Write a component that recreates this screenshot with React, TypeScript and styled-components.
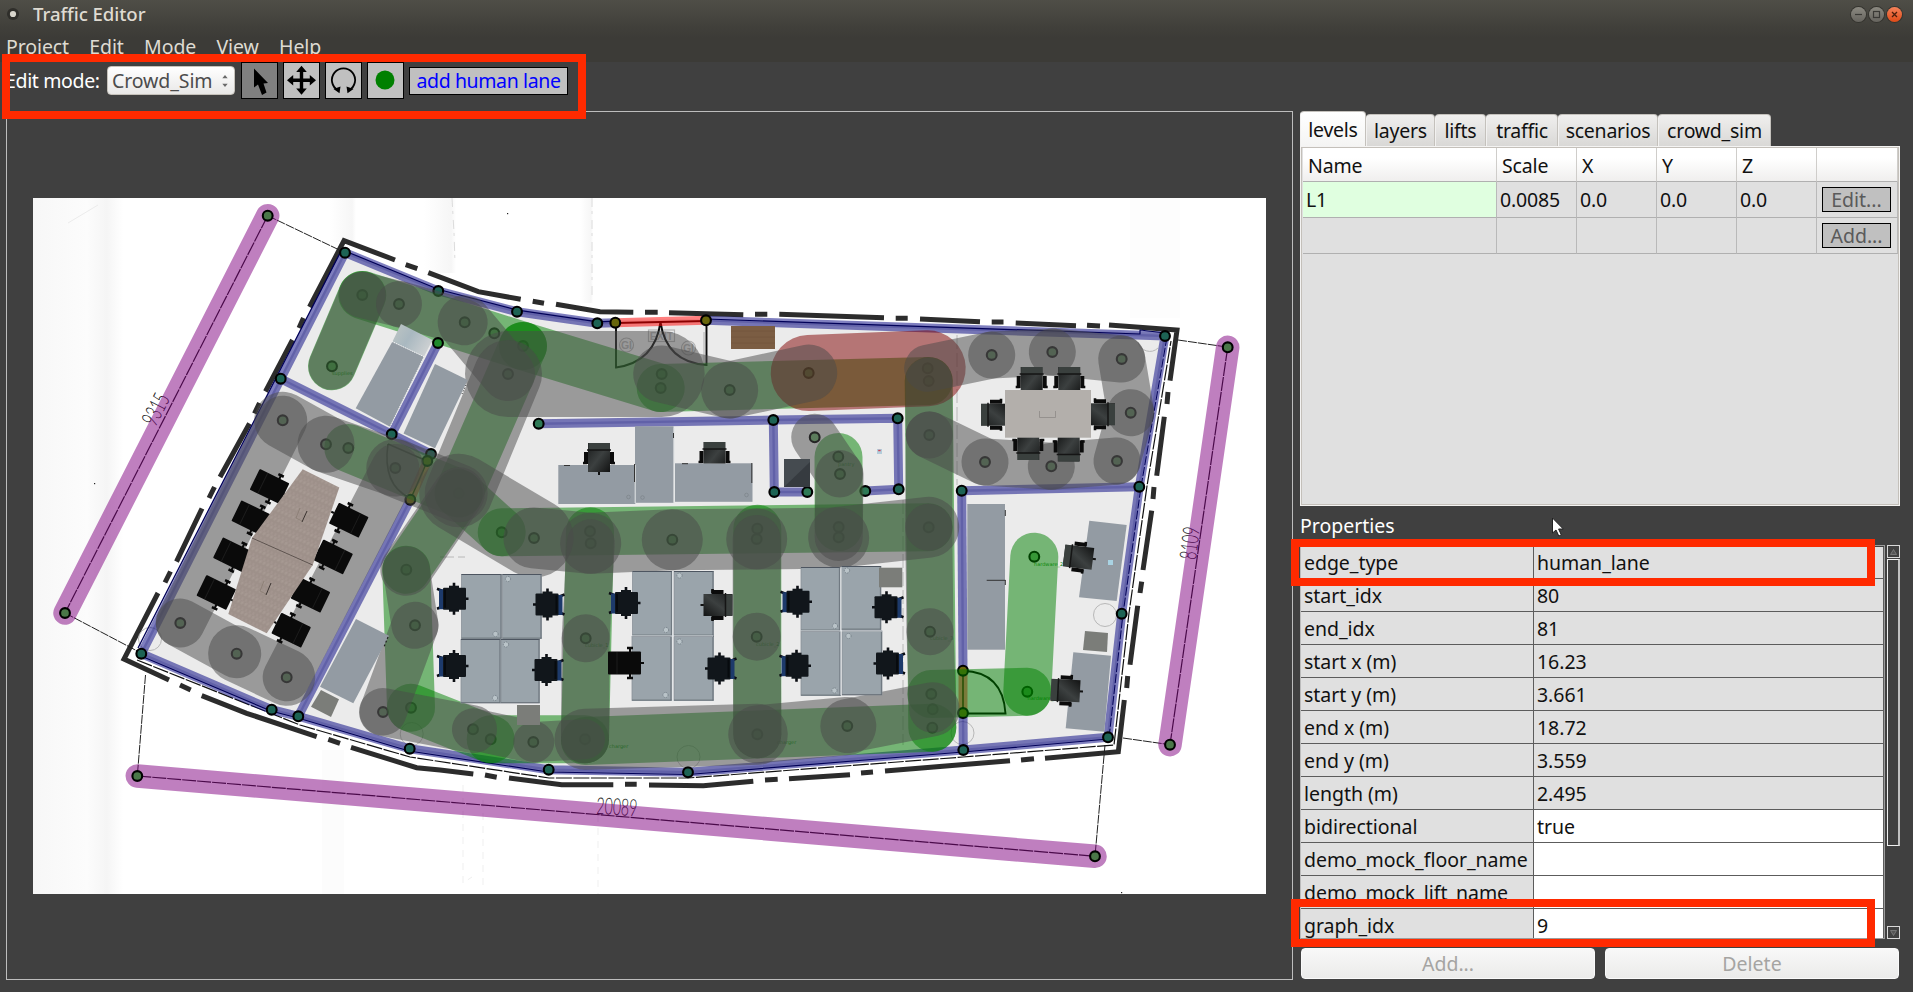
import React from 'react';
import styled, { createGlobalStyle, css } from 'styled-components';

const GlobalStyle = createGlobalStyle`
  * { box-sizing: border-box; }
  html, body { margin: 0; padding: 0; background: #404040; }
  body { font-family: "Noto Sans", "Open Sans", sans-serif; font-size: 19.5px; line-height: 24px; color: #111; overflow: hidden; }
`;

/* ---------- window chrome ---------- */

const Window = styled.div`
  position: relative;
  display: flex;
  flex-direction: column;
  width: 1913px;
  height: 992px;
  background: #404040;
  overflow: hidden;
`;

const TitleBar = styled.header`
  display: flex;
  align-items: center;
  flex: none;
  height: 28px;
  padding: 0 11px 0 6px;
  background: linear-gradient(#4f4e47, #403f3a);
  color: #dfdbd2;
`;

const Title = styled.span`
  flex: 1;
  margin-left: 13px;
  font-size: 18.6px;
  font-weight: 500;
  letter-spacing: -0.05px;
`;

const WindowButtons = styled.div`
  display: flex;
  gap: 3px;
`;

const WindowButton = styled.span<{ $close?: boolean }>`
  display: flex;
  align-items: center;
  justify-content: center;
  width: 15px;
  height: 15px;
  border-radius: 50%;
  box-shadow: 0 0 0 1px #35342f;
  background: ${p => (p.$close ? 'linear-gradient(#f4825a, #df4a16)' : 'linear-gradient(#8b8981, #66645e)')};
`;

const MenuBar = styled.nav`
  display: flex;
  align-items: center;
  flex: none;
  gap: 20.3px;
  height: 34px;
  padding: 4px 0 0 6px;
  background: linear-gradient(#403f3a, #3c3b37 30%);
  color: #dfdbd2;
  letter-spacing: -0.1px;
`;

const Toolbar = styled.div`
  display: flex;
  align-items: center;
  flex: none;
  gap: 5px;
  height: 37px;
  margin-bottom: 12px;
  padding-left: 5px;
  color: #fff;
`;

const ModeLabel = styled.span`
  width: 97px;
  letter-spacing: -0.35px;
  white-space: nowrap;
`;

const Combo = styled.div`
  display: flex;
  align-items: center;
  justify-content: space-between;
  width: 128px;
  height: 29px;
  margin-right: 1px;
  padding: 0 5px 0 4px;
  border: 1px solid #c6c2bb;
  border-radius: 4px;
  background: linear-gradient(#fff, #e9e8e7);
  color: #4c4c4c;
  letter-spacing: -0.1px;
`;

const ToolButton = styled.button<{ $active?: boolean }>`
  display: flex;
  align-items: center;
  justify-content: center;
  width: 37px;
  height: 37px;
  padding: 0;
  border: 1px solid #000;
  background: ${p => (p.$active ? '#808080' : '#c0c0c0')};
`;

const LaneButton = styled.button`
  width: 159px;
  height: 28px;
  padding: 0;
  border: 1px solid #000;
  background: #c0c0c0;
  color: #0000ff;
  font: inherit;
  line-height: 24px;
  letter-spacing: -0.38px;
`;

const Main = styled.main`
  display: flex;
  flex: none;
  height: 869px;
  padding-left: 6px;
  gap: 7px;
`;

const CanvasFrame = styled.section`
  width: 1287px;
  padding: 86px 26px;
  border: 1px solid #bdbdbd;
`;

const Plan = styled.svg`
  display: block;
  width: 1233px;
  height: 696px;
  background: #fff;
`;

const Side = styled.aside`
  display: flex;
  flex-direction: column;
  width: 600px;
`;

/* ---------- tabs and levels table ---------- */

const Tabs = styled.div`
  display: flex;
  align-items: flex-end;
  height: 35px;
`;

const Tab = styled.div<{ $w: number; $active?: boolean }>`
  width: ${p => p.$w}px;
  height: ${p => (p.$active ? 36 : 32)}px;
  margin-bottom: ${p => (p.$active ? -1 : 0)}px;
  padding-top: ${p => (p.$active ? 6 : 4)}px;
  border: 1px solid #c4c1bc;
  border-left-color: #f2f1f0;
  border-bottom: 0;
  border-radius: 4px 4px 0 0;
  background: ${p => (p.$active ? 'linear-gradient(#fff, #f4f4f3)' : 'linear-gradient(#f0efee, #d9d8d6)')};
  text-align: center;
  letter-spacing: -0.25px;
  white-space: nowrap;
`;

const Pane = styled.div`
  height: 360px;
  padding: 1px;
  border: 1px solid #f4f3f2;
  background: #c4c0ba;
`;

const Levels = styled.div`
  height: 100%;
  padding-left: 1px;
  background: #e0e0e0;
`;

const LevelRow = styled.div<{ $head?: boolean }>`
  display: grid;
  grid-template-columns: 194px 80px 80px 80px 80px 1fr;
  height: ${p => (p.$head ? 34 : 36)}px;
  ${p => p.$head && css`background: linear-gradient(#fff 30%, #efeeed);`}
`;

const LevelCell = styled.div<{ $head?: boolean; $named?: boolean }>`
  display: flex;
  align-items: center;
  padding: ${p => (p.$head ? '2px 0 0 5px' : '0 0 0 3px')};
  border-right: 1px solid ${p => (p.$head ? '#cfcdca' : '#b9b9b9')};
  border-bottom: 1px solid #b0b0b0;
  background: ${p => (p.$named ? '#e0ffe0' : 'transparent')};
  letter-spacing: -0.15px;
`;

const CellButton = styled.button`
  width: 69px;
  height: 25px;
  margin-left: 2px;
  padding: 0;
  border: 1px solid #000;
  background: #c0c0c0;
  color: #5a5a5a;
  font: inherit;
  line-height: 22px;
`;

/* ---------- properties ---------- */

const SectionLabel = styled.div`
  height: 39px;
  padding-top: 8px;
  color: #fff;
`;

const PropertyArea = styled.div`
  display: flex;
  gap: 2px;
  height: 394px;
`;

const PropertyTable = styled.div`
  width: 585px;
  height: 394px;
  padding-top: 1px;
  border: 1px solid #9c9c9c;
  border-left-color: #bbb;
  overflow: hidden;
`;

const PropertyRow = styled.div`
  display: grid;
  grid-template-columns: 233px 1fr;
  height: 33px;
  &:first-child { height: 32px; }
`;

const PropertyCell = styled.div<{ $editable?: boolean }>`
  display: flex;
  align-items: center;
  padding: 1px 0 0 3px;
  border-right: 1px solid #5c5c5c;
  border-bottom: 1px solid #5c5c5c;
  background: ${p => (p.$editable ? '#fff' : '#e0e0e0')};
  letter-spacing: -0.04px;
  white-space: nowrap;
`;

const ScrollBar = styled.div`
  display: flex;
  flex-direction: column;
  width: 13px;
`;

const ScrollArrow = styled.div<{ $down?: boolean }>`
  display: flex;
  align-items: center;
  justify-content: center;
  height: 13px;
  margin-top: ${p => (p.$down ? 'auto' : '0')};
  border: 1px solid #d8d8d8;
  background: #404040;
`;

const ScrollThumb = styled.div`
  height: 287px;
  margin-top: 1px;
  border: 1px solid #f0f0f0;
  border-right: 2px solid #c0c0c0;
`;

const Actions = styled.div`
  display: flex;
  gap: 10px;
  margin-top: 9px;
  padding: 0 1px;
`;

const ActionButton = styled.button`
  flex: 1;
  height: 31px;
  padding: 0;
  border: 1px solid #fafafa;
  border-radius: 4px;
  background: linear-gradient(#f8f8f8, #ebebea);
  color: #a5a4a2;
  font: inherit;
  line-height: 26px;
`;

const Highlight = styled.div<{ $x: number; $y: number; $w: number; $h: number }>`
  position: absolute;
  left: ${p => p.$x}px;
  top: ${p => p.$y}px;
  width: ${p => p.$w}px;
  height: ${p => p.$h}px;
  border: 8px solid #ff2a00;
  pointer-events: none;
`;

const Pointer = styled.svg`
  position: absolute;
  left: 1551px;
  top: 517px;
`;

/* ---------- plan data ---------- */

type Pt = [number, number];

const walls: Pt[][] = [
  [[345, 252.7], [438.3, 291], [517, 311.7], [597.3, 323.3], [615.3, 322.7]],
  [[706, 320.3], [1165, 336], [1139.3, 486.7], [1121.7, 613.7], [1108, 737.3], [963.3, 750], [688, 772.3], [548.7, 769.7], [409.7, 748.7], [298.3, 716.3], [271.7, 709.7], [141.3, 653.7], [280.7, 378.7], [345, 252.7]],
  [[280.7, 378.7], [391.7, 434.3], [431, 454]],
  [[391.7, 434.3], [438, 343]],
  [[410.3, 499.7], [298.3, 716.3]],
  [[538.7, 423.7], [773.3, 420], [897.7, 418.3], [898.7, 489.3], [865.3, 491]],
  [[773.3, 420], [774.3, 492], [807.3, 492]],
  [[961.7, 490.7], [1139.3, 486.7]],
  [[961.7, 490.7], [963, 670.7]],
  [[963, 713], [963.3, 750]],
];

const wallNodes: Pt[] = [
  [345, 252.7], [438.3, 291], [517, 311.7], [597.3, 323.3], [280.7, 378.7], [391.7, 434.3], [431, 454],
  [773.3, 420], [774.3, 492], [1165, 336], [897.7, 418.3], [898.7, 489.3], [961.7, 490.7], [1139.3, 486.7],
  [141.3, 653.7], [271.7, 709.7], [298.3, 716.3], [409.7, 748.7], [548.7, 769.7], [688, 772.3], [963.3, 750],
  [1108, 737.3], [1121.7, 613.7],
];
const wallEndNodes: Pt[] = [[538.7, 423.7], [807.3, 492], [865.3, 491]];
const doorNodes: Pt[] = [[615.3, 322.7], [706, 320.3], [427.3, 461], [410.3, 499.7], [963, 670.7], [963, 713]];

const laneNodes: Pt[] = [
  [332, 366.3], [362.3, 295], [399, 304], [464.7, 322.3], [494.3, 333.3], [523, 346], [508, 374],
  [661.7, 374], [660.7, 388], [729.7, 390], [808.7, 373], [814.7, 437.3], [458.7, 493.3], [501.7, 532.3],
  [534, 538], [590, 531.3], [590.7, 543.3], [672.3, 539.7], [757.3, 528.7], [756.7, 539], [838.7, 527],
  [838.7, 537.3], [927.7, 368.3], [928.7, 381], [929.3, 435], [928.7, 527.3], [991.7, 355], [1052.3, 352],
  [1121.7, 359], [1130.7, 412.7], [1117, 461], [1051.3, 466.3], [985, 462], [1034.3, 556.7], [838.3, 456.7],
  [840, 474], [282.7, 420.3], [326, 444.3], [348.3, 448], [395.3, 468], [180.3, 623], [236.7, 653.7],
  [286.7, 677.3], [406.3, 569.7], [415, 625.3], [383, 712], [411, 707.7], [473, 729.3], [490.7, 739.3],
  [533.3, 742], [585, 739.3], [757.3, 734.3], [585.7, 638.3], [756.7, 636.7], [847.3, 726], [931.3, 694],
  [932.7, 709.3], [932.3, 727.7], [930, 631.7], [1027.3, 691.7],
];

/* x1, y1, x2, y2, width */
type Lane = [number, number, number, number, number];

const trafficLanes: Lane[] = [
  [332, 366.3, 362.3, 295, 48], [362.3, 295, 523, 346, 48], [523, 346, 660.7, 388, 48],
  [660.7, 388, 928.7, 381, 48], [928.7, 381, 932.3, 727.7, 48], [523, 346, 458.7, 493.3, 48],
  [348.3, 448, 458.7, 493.3, 48], [458.7, 493.3, 501.7, 532.3, 48], [458.7, 493.3, 406.3, 569.7, 48],
  [406.3, 569.7, 411, 707.7, 48], [411, 707.7, 490.7, 739.3, 48], [490.7, 739.3, 585, 739.3, 48],
  [585, 741, 932.3, 727.7, 48], [501.7, 532.3, 928.7, 527.3, 48], [590, 531.3, 585, 739.3, 48],
  [757.3, 528.7, 757.3, 734.3, 48], [838.5, 457, 838.7, 527, 48], [931.3, 694, 1027.3, 691.7, 48],
  [1027.3, 691.7, 1034.3, 556.7, 48],
];

const selectedLane: Lane[] = [[808.7, 373, 927.7, 368.3, 76]];

const humanLanes: Lane[] = [
  [332, 366.3, 362.3, 295, 47], [362.3, 295, 399, 304, 46], [399, 304, 464.7, 322.3, 46],
  [464.7, 322.3, 508, 374, 54], [508, 374, 661.7, 374, 86], [661.7, 374, 729.7, 390, 57],
  [729.7, 390, 808.7, 373, 57], [508, 374, 458.7, 493.3, 68], [395.3, 468, 458.7, 493.3, 58],
  [458.7, 493.3, 534, 538, 79], [458.7, 493.3, 406.3, 569.7, 52], [406.3, 569.7, 415, 625.3, 47],
  [415, 625.3, 383, 712, 47], [383, 712, 473, 729.3, 48], [473, 729.3, 533.3, 742, 42],
  [533.3, 742, 585, 739.3, 40], [585, 739.3, 757.3, 734.3, 61], [757.3, 734.3, 847.3, 726, 58],
  [847.3, 726, 932.7, 709.3, 54], [534, 538, 590.7, 543.3, 61], [590.7, 543.3, 672.3, 539.7, 61],
  [672.3, 539.7, 756.7, 539, 61], [756.7, 539, 838.7, 538, 61], [838.7, 537.3, 928.7, 527.3, 61],
  [590.7, 543.3, 585.7, 638.3, 48], [585.7, 638.3, 585, 739.3, 48], [756.7, 539, 756.7, 636.7, 48],
  [756.7, 636.7, 757.3, 734.3, 48], [814.7, 437.3, 839.5, 474, 47], [839.5, 474, 838.7, 537, 48],
  [927.7, 368.3, 991.7, 355, 47], [991.7, 355, 1052.3, 352, 47], [1052.3, 352, 1121.7, 359, 47],
  [1121.7, 359, 1130.7, 412.7, 47], [1130.7, 412.7, 1117, 461, 47], [1117, 461, 1051.3, 466.3, 47],
  [1051.3, 466.3, 985, 462, 47], [985, 462, 929.3, 435, 47], [928.7, 381, 929.3, 435, 47],
  [929.3, 435, 928.7, 527.3, 47], [928.7, 527.3, 930, 631.7, 47], [930, 631.7, 932.7, 709.3, 47],
  [282.7, 420.3, 326, 444.3, 57], [326, 444.3, 395.3, 468, 57], [282.7, 420.3, 180.3, 623, 49],
  [180.3, 623, 236.7, 653.7, 49], [236.7, 653.7, 286.7, 677.3, 57], [286.7, 677.3, 395.3, 468, 48],
];

const measures: Lane[] = [
  [267.7, 215.7, 65, 613, 23.5], [137.3, 776, 1095, 856.3, 23.5], [1227.7, 347.3, 1170, 744.7, 23.5],
];

const boundary = [
  'M158 593L124 659L169 680', 'M180 685L190.7 690', 'M201.7 695.7L246.7 713.3L316.7 736.7',
  'M328.3 739.3L340 743.3', 'M351 747.3L416.7 767.7L440 770L473.3 774', 'M485 775L496.7 777.3',
  'M509 778L561.7 784.7H613.3', 'M625 784.3H636.7', 'M649 785L703.3 785.7L753.3 781.3', 'M765 780L777.7 779.3',
  'M789 778.7L850 774.7', 'M861 773L873 772', 'M885 771L1010 760.7', 'M1021 760L1034 758.7',
  'M1045 758.3L1118.3 751.7L1124.3 700', 'M1126.7 688L1127.7 676', 'M1130 664.7L1137.7 605.7',
  'M1140 593L1141.7 581.7', 'M1143 570L1151.7 510.7', 'M1153 499L1154 487', 'M1156.7 475.7L1164.3 416.7',
  'M1167 404L1168 392', 'M1170 380.7L1177 330L1109 325', 'M1087 325.3L1100 326', 'M1015.7 323L1076 325.7',
  'M991.7 322H1003.5', 'M920 319L980 321.7', 'M895.7 318.3H907.7', 'M884 317.7L779.3 314.3', 'M755 314.3H767.3',
  'M669 312.7L743.3 314.7', 'M645 312.3H657.7', 'M556 304.3L600 311.7L633.3 312.3', 'M532.7 301.3L544 303.3',
  'M428.3 272.7L478.3 291.7L520.7 299.3', 'M405.7 264.7L417.3 268.7', 'M395 260L344 240.7L309.5 307',
  'M303.5 318L299 328', 'M292.5 340L265.5 391.5', 'M259.5 403L254.5 413.5', 'M249.5 423.5L220 477',
  'M214.5 487L209 498', 'M202 508.5L176.5 561.7', 'M170.5 571.5L165 582.5',
].join('');

const STEEL = '#939ba3';
const GREY_BOX = '#7b7d79';

/* ---------- plan pieces ---------- */

const line = (pts: Pt[]) => pts.map(p => p.join(',')).join(' ');

function Lanes({ items, color }: { items: Lane[]; color: string }) {
  return (
    <g stroke={color} strokeOpacity={0.5} strokeLinecap="round">
      {items.map(([x1, y1, x2, y2, w], i) => (
        <line key={i} x1={x1} y1={y1} x2={x2} y2={y2} strokeWidth={w} />
      ))}
    </g>
  );
}

function Nodes({ items, fill }: { items: Pt[]; fill: string }) {
  return (
    <g fill={fill} stroke="#000" strokeWidth={2.1}>
      {items.map(([x, y], i) => <circle key={i} cx={x} cy={y} r={4.9} />)}
    </g>
  );
}

/* Task chair seen from above, with its back on the left. */
function TaskChair({ x, y, flip }: { x: number; y: number; flip?: boolean }) {
  return (
    <g transform={`translate(${x} ${y}) scale(${flip ? -1 : 1} 1)`}>
      <path d="M-16 -10L-11 -8M-16 10L-11 8M12 0H15.5M1 -16V16" stroke="#0a0d12" strokeWidth={2.6} />
      <path d="M-4 -13H6V13H-4Z" fill="#11161b" />
      <rect x={-14} y={-9.5} width={5} height={20} fill="#1d3a6b" />
      <rect x={-10} y={-11} width={23} height={22} rx={1} fill="#11161b" />
      <path d="M-8 -9V9" stroke="#070a0e" strokeWidth={2} />
    </g>
  );
}

/* Lounge chair with armrests, back pointing up. */
function ArmChair({ x, y, turn = 0 }: { x: number; y: number; turn?: number }) {
  return (
    <g transform={`translate(${x} ${y}) rotate(${turn})`}>
      <path d="M0 12V18" stroke="#111" strokeWidth={2} />
      <path d="M-13 -5V7M13 -5V7" stroke="#0b0b0b" strokeWidth={4} />
      <path d="M-16 6H-12M16 6H12" stroke="#0b0b0b" strokeWidth={2.6} />
      <rect x={-11} y={-14} width={22} height={29} fill="url(#seat)" />
      <rect x={-10.5} y={-14} width={21} height={7} fill="#3a403e" />
      <path d="M-12 -7H12" stroke="#151515" strokeWidth={1.5} />
    </g>
  );
}

function BlackChair({ x, y, turn = 0 }: { x: number; y: number; turn?: number }) {
  return (
    <g transform={`translate(${x} ${y}) rotate(${turn})`}>
      <path d="M5 -16V16M16 0H19" stroke="#0a0a0a" strokeWidth={2} />
      <path d="M2 -15H8M2 15H8" stroke="#0a0a0a" strokeWidth={2.6} />
      <rect x={-17} y={-11.5} width={33} height={23} rx={1} fill="#0a0a0a" />
      <path d="M-8 -11V11" stroke="#1d1d1d" strokeWidth={1} />
    </g>
  );
}

function Desk({ x, y, w, h, knob }: { x: number; y: number; w: number; h: number; knob: Pt }) {
  return (
    <g>
      <rect x={x} y={y} width={w} height={h} fill="#9aa4ab" stroke="#8a9299" strokeWidth={0.8} />
      <path d={`M${x} ${y}h${w}`} stroke="#4d5560" strokeWidth={1} />
      <path d={`M${x + w - 0.6} ${y}v${h}M${x} ${y + h - 0.4}h${w}`} stroke="#687078" strokeWidth={0.9} />
      <circle cx={knob[0]} cy={knob[1]} r={2.6} fill="#b9c3c8" stroke="#77828a" strokeWidth={1} strokeDasharray="1.4 1" />
    </g>
  );
}

function Furniture() {
  return (
    <g>
      {/* store room */}
      <polygon points="401,324 432.5,340 424,356.5 392.5,341.5" fill="url(#glass)" />
      <polygon points="392.3,341.7 424,356.7 390,426.7 355.7,408.3" fill={STEEL} />
      <path d="M392.3 341.7L424 356.7L390 426.7" fill="none" stroke="#fff" strokeWidth={0.9} strokeDasharray="1 1" />
      <polygon points="435,364 467.7,380 435,448.3 403.5,433.5" fill={STEEL} />
      <path d="M466 385L462 394" stroke="#222" strokeWidth={1} strokeDasharray="1 2" />

      {/* meeting room on the left */}
      <BlackChair x={270} y={486.7} turn={26} />
      <BlackChair x={251.7} y={518} turn={26} />
      <BlackChair x={233.3} y={555} turn={26} />
      <BlackChair x={216.7} y={592.7} turn={26} />
      <BlackChair x={348.3} y={520} turn={206} />
      <BlackChair x={332.7} y={556.7} turn={206} />
      <BlackChair x={310} y={595} turn={206} />
      <BlackChair x={290.7} y={630} turn={206} />
      <polygon points="302.7,469.3 339.3,487.5 312.7,565 266.7,633.3 228.3,614 252,538" fill="url(#wood)" />
      <path d="M252 538L312.7 565" stroke="#5d534f" strokeWidth={1} />
      <path d="M307 511L302 522M271 583L266 595" stroke="#3b3431" strokeWidth={1} />
      <path d="M300 508l-4 10M264 581l-4 10M296 518l6 3M260 591l6 3" stroke="#85786f" strokeWidth={0.7} fill="none" />
      <polygon points="356,619 389,635.7 353.3,703.3 320,686.7" fill={STEEL} />
      <path d="M388 637L384 647" stroke="#222" strokeWidth={1.2} strokeDasharray="2 2" />
      <polygon points="321,690 339,699.3 331,717 311,706.7" fill={GREY_BOX} />

      {/* desks in the middle */}
      <rect x={558.3} y={465} width={77} height={39} fill={STEEL} />
      <rect x={675} y={463.3} width={77.5} height={38.5} fill={STEEL} />
      <rect x={635} y={426.3} width={38.5} height={76.5} fill={STEEL} />
      <path d="M635.2 465v38M674.3 428v74.5" stroke="#e4e6e8" strokeWidth={1} />
      <path d="M564 465.5h6M682 463.7h6M634.5 464v18M751.8 463v20M673.5 433v5" stroke="#333" strokeWidth={1} />
      <g fill="none" stroke="#7d858c" strokeWidth={0.8}>
        <circle cx={628.5} cy={497} r={1.8} /><circle cx={642.5} cy={497.5} r={1.8} /><circle cx={746.5} cy={495} r={1.8} />
      </g>
      <ArmChair x={599} y={457} />
      <g clipPath="url(#deskEdge)"><ArmChair x={714.5} y={456} /></g>
      <rect x={784} y={459} width={26} height={28} fill="#454b50" />
      <path d="M784 487L810 462V487Z" fill="#363b40" />
      <rect x={731} y={326} width={44} height={23} fill="#7b5d43" />
      <path d="M731 331h44M731 337h44M731 343h44" stroke="#73563c" strokeWidth={0.8} />

      {/* conference table */}
      <ArmChair x={1031.7} y={381} />
      <ArmChair x={1069.3} y={381} />
      <ArmChair x={995} y={414.7} turn={-90} />
      <ArmChair x={1101} y={414.3} turn={90} />
      <ArmChair x={1028.3} y={446} turn={180} />
      <ArmChair x={1068.7} y={447.5} turn={180} />
      <rect x={1005} y={390} width={86} height={47.7} fill="#b3afab" />
      <path d="M1039.5 411v6.5h16v-6.5" fill="none" stroke="#8d8986" strokeWidth={0.8} />

      {/* work islands */}
      <Desk x={461.5} y={574.5} w={40} h={64} knob={[495.5, 634]} />
      <Desk x={502.5} y={574.5} w={39} h={64} knob={[508, 579]} />
      <Desk x={461} y={639.5} w={39.5} h={63.5} knob={[495, 698]} />
      <Desk x={501} y={639.5} w={38.5} h={63.5} knob={[506, 644.5]} />
      <Desk x={632.5} y={571.5} w={39.5} h={64} knob={[666, 630]} />
      <Desk x={674} y={571.5} w={39.5} h={64} knob={[679.5, 575.5]} />
      <Desk x={632} y={636.5} w={39.5} h={64} knob={[665.5, 695]} />
      <Desk x={674} y={636.5} w={39.5} h={64} knob={[679.5, 641.5]} />
      <Desk x={801} y={567.5} w={39} h={63} knob={[835, 626]} />
      <Desk x={841.5} y={566.5} w={39.5} h={63} knob={[847, 570.5]} />
      <Desk x={801} y={631.5} w={39.5} h={64} knob={[834.5, 690.5]} />
      <Desk x={842} y={631} w={40} h={64} knob={[848.5, 636]} />
      <path d="M672.7 571V701M632 636H713M841 567V695M801 631H882" stroke="#e1e5e8" strokeWidth={1} />
      <TaskChair x={453} y={598.7} />
      <TaskChair x={453} y={666} />
      <TaskChair x={548.5} y={604.5} flip />
      <TaskChair x={547.5} y={670} flip />
      <TaskChair x={625} y={603} />
      <ArmChair x={718.5} y={605} turn={90} />
      <BlackChair x={625} y={663} />
      <TaskChair x={720.5} y={668.5} flip />
      <TaskChair x={796.5} y={601.7} />
      <TaskChair x={795.5} y={665.7} />
      <TaskChair x={887.5} y={607.3} flip />
      <TaskChair x={889} y={663.5} flip />
      <rect x={517} y={705} width={23} height={20} fill={GREY_BOX} />
      <rect x={879} y={567.7} width={23.3} height={19.6} fill={GREY_BOX} />

      {/* hardware room */}
      <rect x={967.3} y={504} width={37.7} height={145.7} fill={STEEL} />
      <path d="M986.7 580.3H1005.5M1005.3 510v6M1005.3 580v5" stroke="#333" strokeWidth={1} />
      <polygon points="1089.3,520.7 1126.7,525 1116.7,601 1079,597.3" fill={STEEL} />
      <polygon points="1085,631 1108,633 1107,652 1083,650" fill={GREY_BOX} />
      <polygon points="1073.3,652.3 1111,655.7 1104.3,731.7 1065.7,728.3" fill={STEEL} />
      <ArmChair x={1078} y={557} turn={-83} />
      <ArmChair x={1065} y={690.5} turn={-87} />
      <rect x={1108} y={560} width={5} height={5} fill="#a9d3e3" />
      <rect x={877} y={449} width={5} height={5} fill="#b4cddb" />
      <rect x={878.2} y={449.8} width={2.4} height={1.4} fill="#c45" />
    </g>
  );
}

function FloorPlan() {
  const interior = '345,250 438,289 517,309 597,320 706,319 1167,333 1141,486 1124,613 1110,739 963,752 688,774 548,772 409,751 298,718 271,712 139,655 280,378';
  return (
    <Plan viewBox="33 198 1233 696">
      <defs>
        <linearGradient id="seat" x1="0" y1="0" x2="1" y2="1">
          <stop offset="0" stopColor="#1a1c1c" />
          <stop offset="0.5" stopColor="#3c4040" />
          <stop offset="1" stopColor="#121313" />
        </linearGradient>
        <linearGradient id="glass" x1="0" y1="0" x2="1" y2="0.5">
          <stop offset="0" stopColor="#bfc6c4" />
          <stop offset="0.5" stopColor="#a9b8c0" />
          <stop offset="1" stopColor="#cbcfd1" />
        </linearGradient>
        <linearGradient id="fold" x1="0" y1="0" x2="1" y2="0">
          <stop offset="0" stopColor="#f7f7f7" />
          <stop offset="0.6" stopColor="#fcfcfc" />
          <stop offset="0.82" stopColor="#f5f5f5" />
          <stop offset="1" stopColor="#fff" />
        </linearGradient>
        <linearGradient id="crease" x1="0" y1="0" x2="1" y2="0">
          <stop offset="0" stopColor="#fff" />
          <stop offset="0.85" stopColor="#f6f6f6" />
          <stop offset="1" stopColor="#fff" />
        </linearGradient>
        <pattern id="wood" width="4" height="9" patternUnits="userSpaceOnUse" patternTransform="rotate(24)">
          <rect width="4" height="9" fill="#a3958f" />
          <path d="M1 0V6M3 3V9" stroke="#978982" strokeWidth="0.8" />
          <path d="M2 1V4" stroke="#afa29b" strokeWidth="0.7" />
        </pattern>
        <clipPath id="deskEdge"><rect x={690} y={430} width={50} height={33.5} /></clipPath>
      </defs>

      {/* scanned paper */}
      <rect x={33} y={198} width={90} height={696} fill="url(#fold)" />
      <rect x={330} y={198} width={26} height={44} fill="url(#crease)" />
      <rect x={424} y={198} width={32} height={75} fill="url(#crease)" />
      <rect x={580} y={198} width={13} height={105} fill="url(#crease)" />
      <rect x={1130} y={198} width={50} height={120} fill="#fdfdfd" />
      <rect x={322} y={750} width={22} height={144} fill="#fcfcfc" />
      <path d="M452 198l2 35l1 30M592 198v100" fill="none" stroke="#dcdcdc" strokeWidth={1} strokeDasharray="9 4 3 6" />
      <path d="M463 785v98l9 -6M483 800v90M598 815v79" fill="none" stroke="#efefef" strokeWidth={1} strokeDasharray="7 6" />
      <path d="M98 205l-30 18" stroke="#ececec" strokeWidth={1} />
      <rect x={507} y={213} width={1.2} height={1.2} fill="#222" />
      <rect x={94} y={483} width={1.2} height={1.2} fill="#222" />
      <rect x={1121} y={892} width={1.2} height={1.2} fill="#222" />

      <polygon points={interior} fill="#ebebeb" />

      {/* building outline and dimension leaders */}
      <path d={boundary} fill="none" stroke="#2c2c2c" strokeWidth={5} />
      <path d="M267.7 215.7L345 252.7M65 613L141 653M145.5 675L137.3 776M1105 745L1095 856M1178 340L1227 347M1123 738L1170 744.7" stroke="#222" strokeWidth={1} fill="none" strokeDasharray="9 1" />
      <path d="M137 660L300 725L410 757L549 778H688L963 757L1114 745L1129 613L1147 486L1171 341" stroke="#111" strokeWidth={1.2} fill="none" strokeDasharray="16 1.5" />
      <g fill="none" stroke="#b8b8b8" strokeWidth={1}>
        <circle cx={1105} cy={615} r={11.5} />
        <circle cx={962.5} cy={733} r={11.5} />
        <circle cx={688.5} cy={757} r={11.5} />
        <circle cx={411.7} cy={734} r={11.5} />
        <circle cx={150} cy={639} r={11.5} />
        <path d="M1138 342a12 12 0 0 0 20 6" />
        <path d="M440 557h25M957 335v150M903 500v245" strokeDasharray="14 4" />
      </g>

      {/* dimension texts */}
      <g fontFamily='Lato, "Open Sans", sans-serif' fontWeight={300} fontSize={23.5} fill="#222" textAnchor="middle">
        <text transform="translate(163 413) rotate(-63) scale(0.6 1)">9315</text>
        <text transform="translate(616.5 815) rotate(3) scale(0.6 1)">20089</text>
        <text transform="translate(1198 544) rotate(-83) scale(0.6 1)">8109</text>
      </g>

      {/* exit signs and entrance */}
      <g fill="none" stroke="#b2b2b2" strokeWidth={1.2}>
        <circle cx={626.5} cy={345} r={7} />
        <circle cx={688.5} cy={348} r={7} />
        <rect x={648.5} y={330} width={26} height={11.5} />
      </g>
      <g fontFamily='"Liberation Sans", sans-serif' fontWeight={700} fill="#b2b2b2" textAnchor="middle">
        <text x={661.5} y={339.5} fontSize={10.5}>EXIT</text>
        <text x={626.5} y={349} fontSize={10.5}>GI</text>
        <text x={688.5} y={352} fontSize={10.5}>GI</text>
      </g>
      <path d="M704 332V363" stroke="#bbb" strokeWidth={1.2} />
      <path d="M616 327V367.5Q655 362 660.5 322Q666 362 706.5 365V325" fill="none" stroke="#0c0c0c" strokeWidth={1.9} />
      <path d="M388 444Q382 485 410 498M388 444L427 461" fill="none" stroke="#222" strokeWidth={1.6} />
      <path d="M963 670.7Q1003 672 1005.5 713.5H963" fill="none" stroke="#000" strokeWidth={1.9} />

      {/* walls */}
      <g fill="none" strokeLinejoin="round">
        {walls.map((w, i) => <polyline key={i} points={line(w)} stroke="#000080" strokeOpacity={0.5} strokeWidth={9} />)}
        {walls.map((w, i) => <polyline key={i} points={line(w)} stroke="#00006a" strokeOpacity={0.17} strokeWidth={2.4} />)}
        <polyline points={line(walls[0])} transform="translate(0.5 -1.5)" stroke="#000058" strokeWidth={1.2} />
        <polyline points="706,319 1140,334 1140,330 1165,333" stroke="#000058" strokeWidth={1.2} />
        <polyline points="1108,739 963,752 688,774.5 548,772 409,751 298,718 271,711 141,656" stroke="#000058" strokeWidth={1.2} />
        <polyline points="140,649 279,377 343,252" transform="translate(-2 -1)" stroke="#000058" strokeWidth={1.3} />
        <polyline points="1167,337 1141,487 1123,614 1109,738" stroke="#000058" strokeWidth={1} strokeDasharray="9 2" />
      </g>
      <path d="M615.3 322.7L706 320.3M427.3 461L410.3 499.7M963 670.7V713" stroke="#ff0000" strokeOpacity={0.5} strokeWidth={9} />
      <path d="M615.3 323L706 321" stroke="#8b0000" strokeWidth={2} />
      <path d="M427.3 461L410.3 499.7M963 670.7V713" stroke="#3a1800" strokeWidth={1.4} />

      <Nodes items={wallNodes} fill="#1d6354" />
      <Nodes items={wallEndNodes} fill="#2e7a56" />
      <Nodes items={doorNodes} fill="#68660c" />
      <Nodes items={laneNodes} fill="#6fae6f" />

      {/* waypoint names */}
      <g fontFamily='"DejaVu Sans", sans-serif' fontSize={5} fill="#0a8a0a">
        <text x={332} y={375}>supplies</text>
        <text x={1034} y={566}>hardware_2</text>
        <text x={1027.5} y={700}>hardware_1</text>
        <text x={609} y={748}>charger</text>
        <text x={777} y={744}>charger</text>
        <text x={585} y={647}>cubicle_1</text>
        <text x={756} y={646}>cubicle_2</text>
        <text x={930} y={640}>cubicle_3</text>
        <text x={838} y={466}>pantry</text>
      </g>

      <Lanes items={trafficLanes} color="#008000" />
      <Lanes items={selectedLane} color="#800000" />
      <Lanes items={humanLanes} color="#494949" />
      <Nodes items={[[438, 343]]} fill="#1f8a2c" />
      <Lanes items={measures} color="#800080" />
      <path d="M267.7 215.7L65 613M137.3 776L1095 856.3M1227.7 347.3L1170 744.7" stroke="#4a0a4a" strokeWidth={1.2} strokeDasharray="14 1" fill="none" />
      <Nodes items={[[267.7, 215.7], [65, 613], [137.3, 776], [1095, 856.3], [1227.7, 347.3], [1170, 744.7]]} fill="#4a7748" />
      <Furniture />
    </Plan>
  );
}

/* ---------- page ---------- */

const properties: [string, string, boolean][] = [
  ['edge_type', 'human_lane', false],
  ['start_idx', '80', false],
  ['end_idx', '81', false],
  ['start x (m)', '16.23', false],
  ['start y (m)', '3.661', false],
  ['end x (m)', '18.72', false],
  ['end y (m)', '3.559', false],
  ['length (m)', '2.495', false],
  ['bidirectional', 'true', true],
  ['demo_mock_floor_name', '', true],
  ['demo_mock_lift_name', '', true],
  ['graph_idx', '9', true],
];

const tabs: [string, number][] = [['levels', 66], ['layers', 69], ['lifts', 51], ['traffic', 72], ['scenarios', 100], ['crowd_sim', 113]];

export default function App() {
  return (
    <>
      <GlobalStyle />
      <Window>
        <TitleBar>
          <svg width="14" height="14" viewBox="0 0 14 14">
            <circle cx="7" cy="7" r="6" fill="#2f2e2a" />
            <circle cx="7" cy="7" r="3.1" fill="#d8d5cc" />
          </svg>
          <Title>Traffic Editor</Title>
          <WindowButtons>
            <WindowButton>
              <svg width="9" height="9" viewBox="0 0 9 9"><path d="M1 4.5h7" stroke="#3a3935" strokeWidth="1.2" /></svg>
            </WindowButton>
            <WindowButton>
              <svg width="9" height="9" viewBox="0 0 9 9"><rect x="1.5" y="1.5" width="6" height="6" fill="none" stroke="#3a3935" strokeWidth="1.2" /></svg>
            </WindowButton>
            <WindowButton $close>
              <svg width="9" height="9" viewBox="0 0 9 9"><path d="M2 2l5 5M7 2L2 7" stroke="#4a1e0c" strokeWidth="1.3" /></svg>
            </WindowButton>
          </WindowButtons>
        </TitleBar>
        <MenuBar>
          {['Project', 'Edit', 'Mode', 'View', 'Help'].map(m => <span key={m}>{m}</span>)}
        </MenuBar>
        <Toolbar>
          <ModeLabel>Edit mode:</ModeLabel>
          <Combo>
            Crowd_Sim
            <svg width="8" height="14" viewBox="0 0 8 14">
              <path d="M1.3 4.2L4 1L6.7 4.2ZM1.3 9.8L4 13L6.7 9.8Z" fill="#6a6a6a" />
            </svg>
          </Combo>
          <ToolButton $active>
            <svg width="35" height="35" viewBox="0 0 35 35">
              <path d="M12 5.5V24.5L16 21.5L20 32L24.5 29.5L21.5 20.5L26 20Z" fill="#000" />
            </svg>
          </ToolButton>
          <ToolButton>
            <svg width="35" height="35" viewBox="0 0 35 35">
              <path d="M17.5 2.8L22.8 9H12.2ZM17.5 31.8L12.2 25.6H22.8ZM3 17.3L9.2 12V22.6ZM32 17.3L25.8 22.6V12Z" fill="#000" />
              <path d="M17.5 8V27M8 17.3H27" stroke="#000" strokeWidth="3.4" />
            </svg>
          </ToolButton>
          <ToolButton>
            <svg width="35" height="35" viewBox="0 0 35 35">
              <path d="M12 27.2A11.6 11.6 0 1 1 23 27.2" fill="none" stroke="#000" strokeWidth="1.8" />
              <path d="M7.5 26L14.5 23.5L13.5 30.2ZM27.5 26L20.5 23.5L21.5 30.2Z" fill="#000" />
            </svg>
          </ToolButton>
          <ToolButton>
            <svg width="35" height="35" viewBox="0 0 35 35"><circle cx="17" cy="17" r="9.5" fill="#008000" /></svg>
          </ToolButton>
          <LaneButton>add human lane</LaneButton>
        </Toolbar>
        <Main>
          <CanvasFrame><FloorPlan /></CanvasFrame>
          <Side>
            <Tabs>
              {tabs.map(([name, w], i) => <Tab key={name} $w={w} $active={i === 0}>{name}</Tab>)}
            </Tabs>
            <Pane>
              <Levels>
                <LevelRow $head>
                  {['Name', 'Scale', 'X', 'Y', 'Z', ''].map((h, i) => <LevelCell key={i} $head>{h}</LevelCell>)}
                </LevelRow>
                <LevelRow>
                  <LevelCell $named>L1</LevelCell>
                  <LevelCell>0.0085</LevelCell>
                  <LevelCell>0.0</LevelCell>
                  <LevelCell>0.0</LevelCell>
                  <LevelCell>0.0</LevelCell>
                  <LevelCell><CellButton>Edit...</CellButton></LevelCell>
                </LevelRow>
                <LevelRow>
                  <LevelCell /><LevelCell /><LevelCell /><LevelCell /><LevelCell />
                  <LevelCell><CellButton>Add...</CellButton></LevelCell>
                </LevelRow>
              </Levels>
            </Pane>
            <SectionLabel>Properties</SectionLabel>
            <PropertyArea>
              <PropertyTable>
                {properties.map(([name, value, editable]) => (
                  <PropertyRow key={name}>
                    <PropertyCell>{name}</PropertyCell>
                    <PropertyCell $editable={editable}>{value}</PropertyCell>
                  </PropertyRow>
                ))}
              </PropertyTable>
              <ScrollBar>
                <ScrollArrow>
                  <svg width="7" height="6" viewBox="0 0 7 6"><path d="M0.5 5.5L3.5 0.5L6.5 5.5Z" fill="#555" stroke="#888" strokeWidth="0.7" /></svg>
                </ScrollArrow>
                <ScrollThumb />
                <ScrollArrow $down>
                  <svg width="7" height="6" viewBox="0 0 7 6"><path d="M0.5 0.5L3.5 5.5L6.5 0.5Z" fill="#555" stroke="#888" strokeWidth="0.7" /></svg>
                </ScrollArrow>
              </ScrollBar>
            </PropertyArea>
            <Actions>
              <ActionButton>Add...</ActionButton>
              <ActionButton>Delete</ActionButton>
            </Actions>
          </Side>
        </Main>

        <Highlight $x={2} $y={54} $w={584} $h={65} />
        <Highlight $x={1291} $y={539} $w={584} $h={47} />
        <Highlight $x={1291} $y={899} $w={584} $h={48} />
        <Pointer width="16" height="22" viewBox="0 0 16 22">
          <path d="M1.5 1V16L5 13L7.8 19L10.3 17.9L7.6 12H12.3Z" fill="#fff" stroke="#222" strokeWidth="1" />
        </Pointer>
      </Window>
    </>
  );
}
